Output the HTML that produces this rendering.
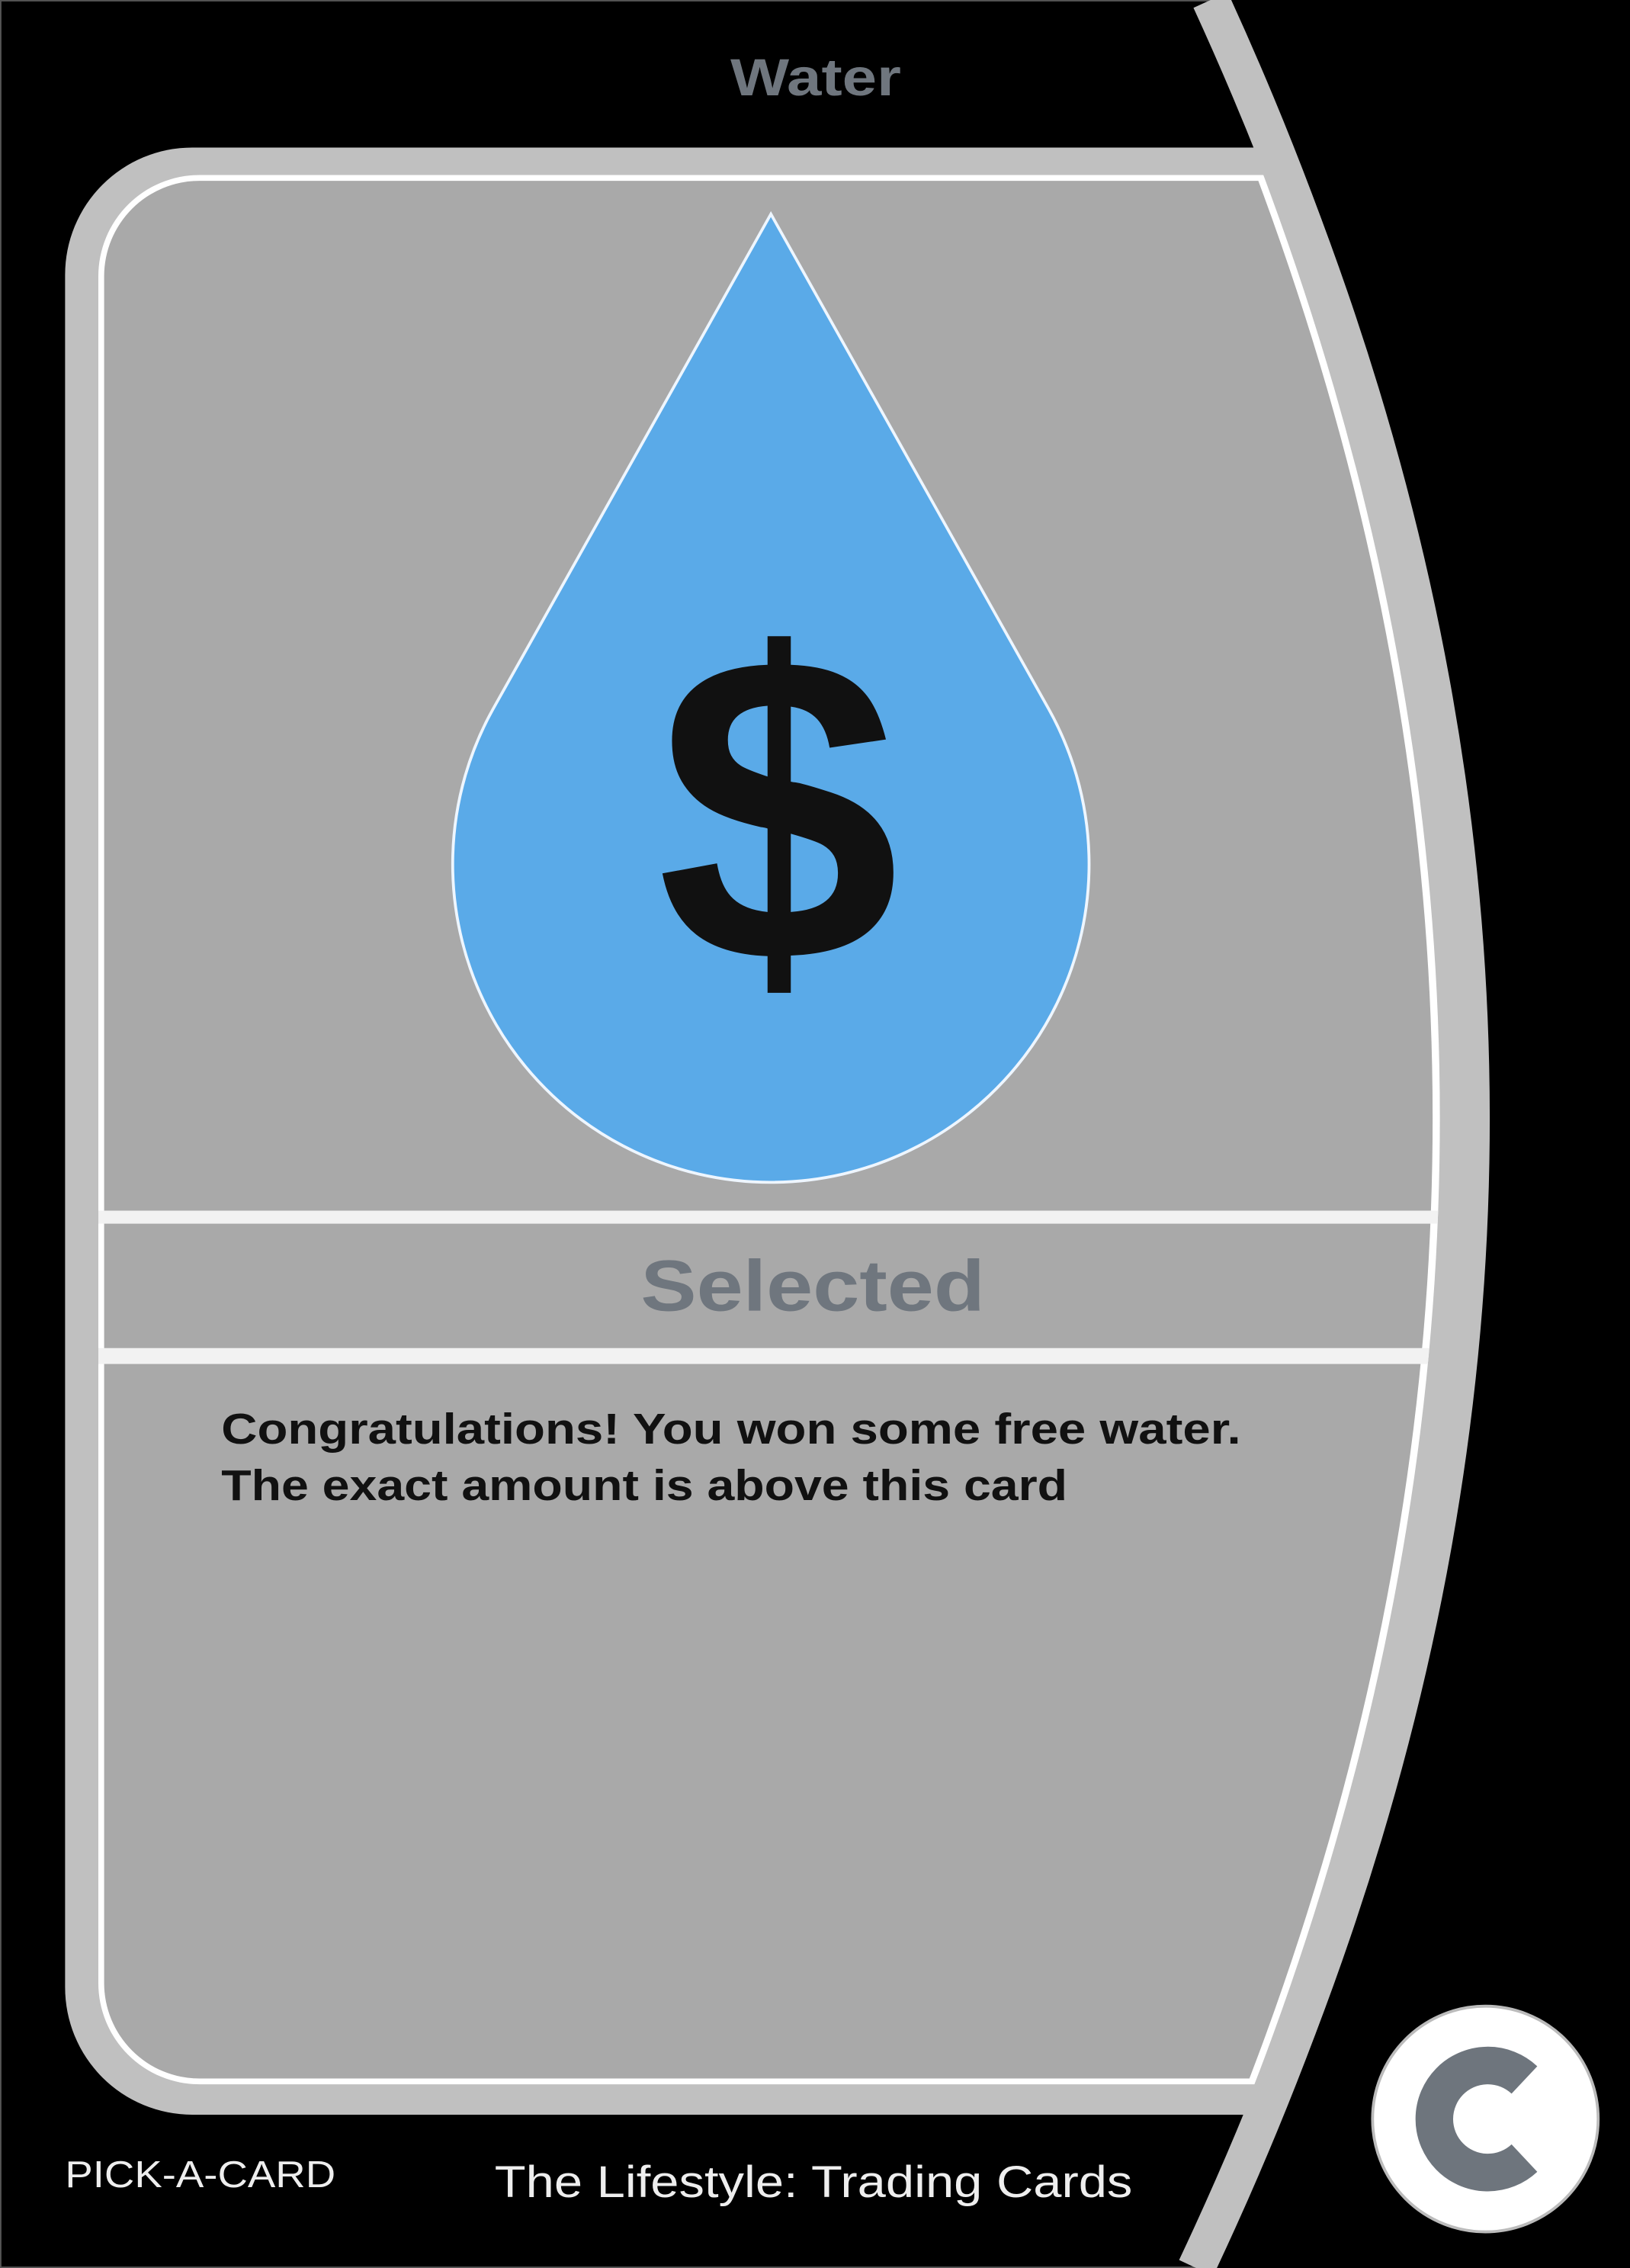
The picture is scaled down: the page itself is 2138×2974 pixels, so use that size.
<!DOCTYPE html>
<html><head><meta charset="utf-8"><style>
html,body{margin:0;padding:0;background:#000;}
svg{display:block}
</style></head><body>
<svg width="2138" height="2974" viewBox="0 0 1127 1568" preserveAspectRatio="none" xmlns="http://www.w3.org/2000/svg">
<defs>
<clipPath id="inner">
<path d="M0,0 L819,0 Q1167,784 809,1568 L0,1568 Z"/>
</clipPath>
<clipPath id="innerline">
<path d="M0,0 L824,0 Q1172,784 814,1568 L0,1568 Z"/>
</clipPath>
</defs>
<rect x="0" y="0" width="1127" height="1568" fill="#000"/>
<rect x="0.5" y="0.5" width="1126" height="1567" fill="none" stroke="#555" stroke-width="1"/>
<rect x="45" y="102" width="1100" height="1360" rx="88" fill="#c0c0c0"/>
<path d="M850,0 Q1215,784 840,1568 L1127,1568 L1127,0 Z" fill="#000"/>
<g clip-path="url(#innerline)">
<rect x="68" y="121" width="1100" height="1320" rx="70" fill="#fff"/>
</g>
<g clip-path="url(#inner)">
<rect x="72" y="125" width="1100" height="1312" rx="66" fill="#a9a9a9"/>
</g>
<g clip-path="url(#innerline)">
<rect x="68" y="837" width="1000" height="9" fill="#f2f2f2"/>
<rect x="68" y="932" width="1000" height="11" fill="#f2f2f2"/>
</g>
<path d="M837,0 Q1197,784 827,1568" fill="none" stroke="#c0c0c0" stroke-width="26"/>
<path d="M533,148 L725,490 A220,220 0 1 1 341,490 Z" fill="#5aaae8" stroke="#eef6ff" stroke-width="2"/>
<text x="538" y="664" text-anchor="middle" font-family="Liberation Sans, sans-serif" font-weight="bold" font-size="302" fill="#111">$</text>
<text x="505" y="66" textLength="118" lengthAdjust="spacingAndGlyphs" font-family="Liberation Sans, sans-serif" font-weight="bold" font-size="36" fill="#6f767e">Water</text>
<text x="443" y="906" textLength="238" lengthAdjust="spacingAndGlyphs" font-family="Liberation Sans, sans-serif" font-weight="bold" font-size="50" fill="#6f767e">Selected</text>
<text font-family="Liberation Sans, sans-serif" font-weight="bold" font-size="30" fill="#111">
<tspan x="153" y="998" textLength="705" lengthAdjust="spacingAndGlyphs">Congratulations! You won some free water.</tspan>
<tspan x="153" y="1037" textLength="585" lengthAdjust="spacingAndGlyphs">The exact amount is above this card</tspan>
</text>
<text x="45" y="1512" textLength="187" lengthAdjust="spacingAndGlyphs" font-family="Liberation Sans, sans-serif" font-size="26" fill="#eee">PICK-A-CARD</text>
<text x="342" y="1519" textLength="441" lengthAdjust="spacingAndGlyphs" font-family="Liberation Sans, sans-serif" font-size="31" fill="#eee">The Lifestyle: Trading Cards</text>
<circle cx="1027" cy="1465" r="78" fill="#fff" stroke="#bbb" stroke-width="2"/>
<path d="M1054,1438 A37,37 0 1 0 1054,1492" fill="none" stroke="#6e757d" stroke-width="26"/>
</svg>
</body></html>
